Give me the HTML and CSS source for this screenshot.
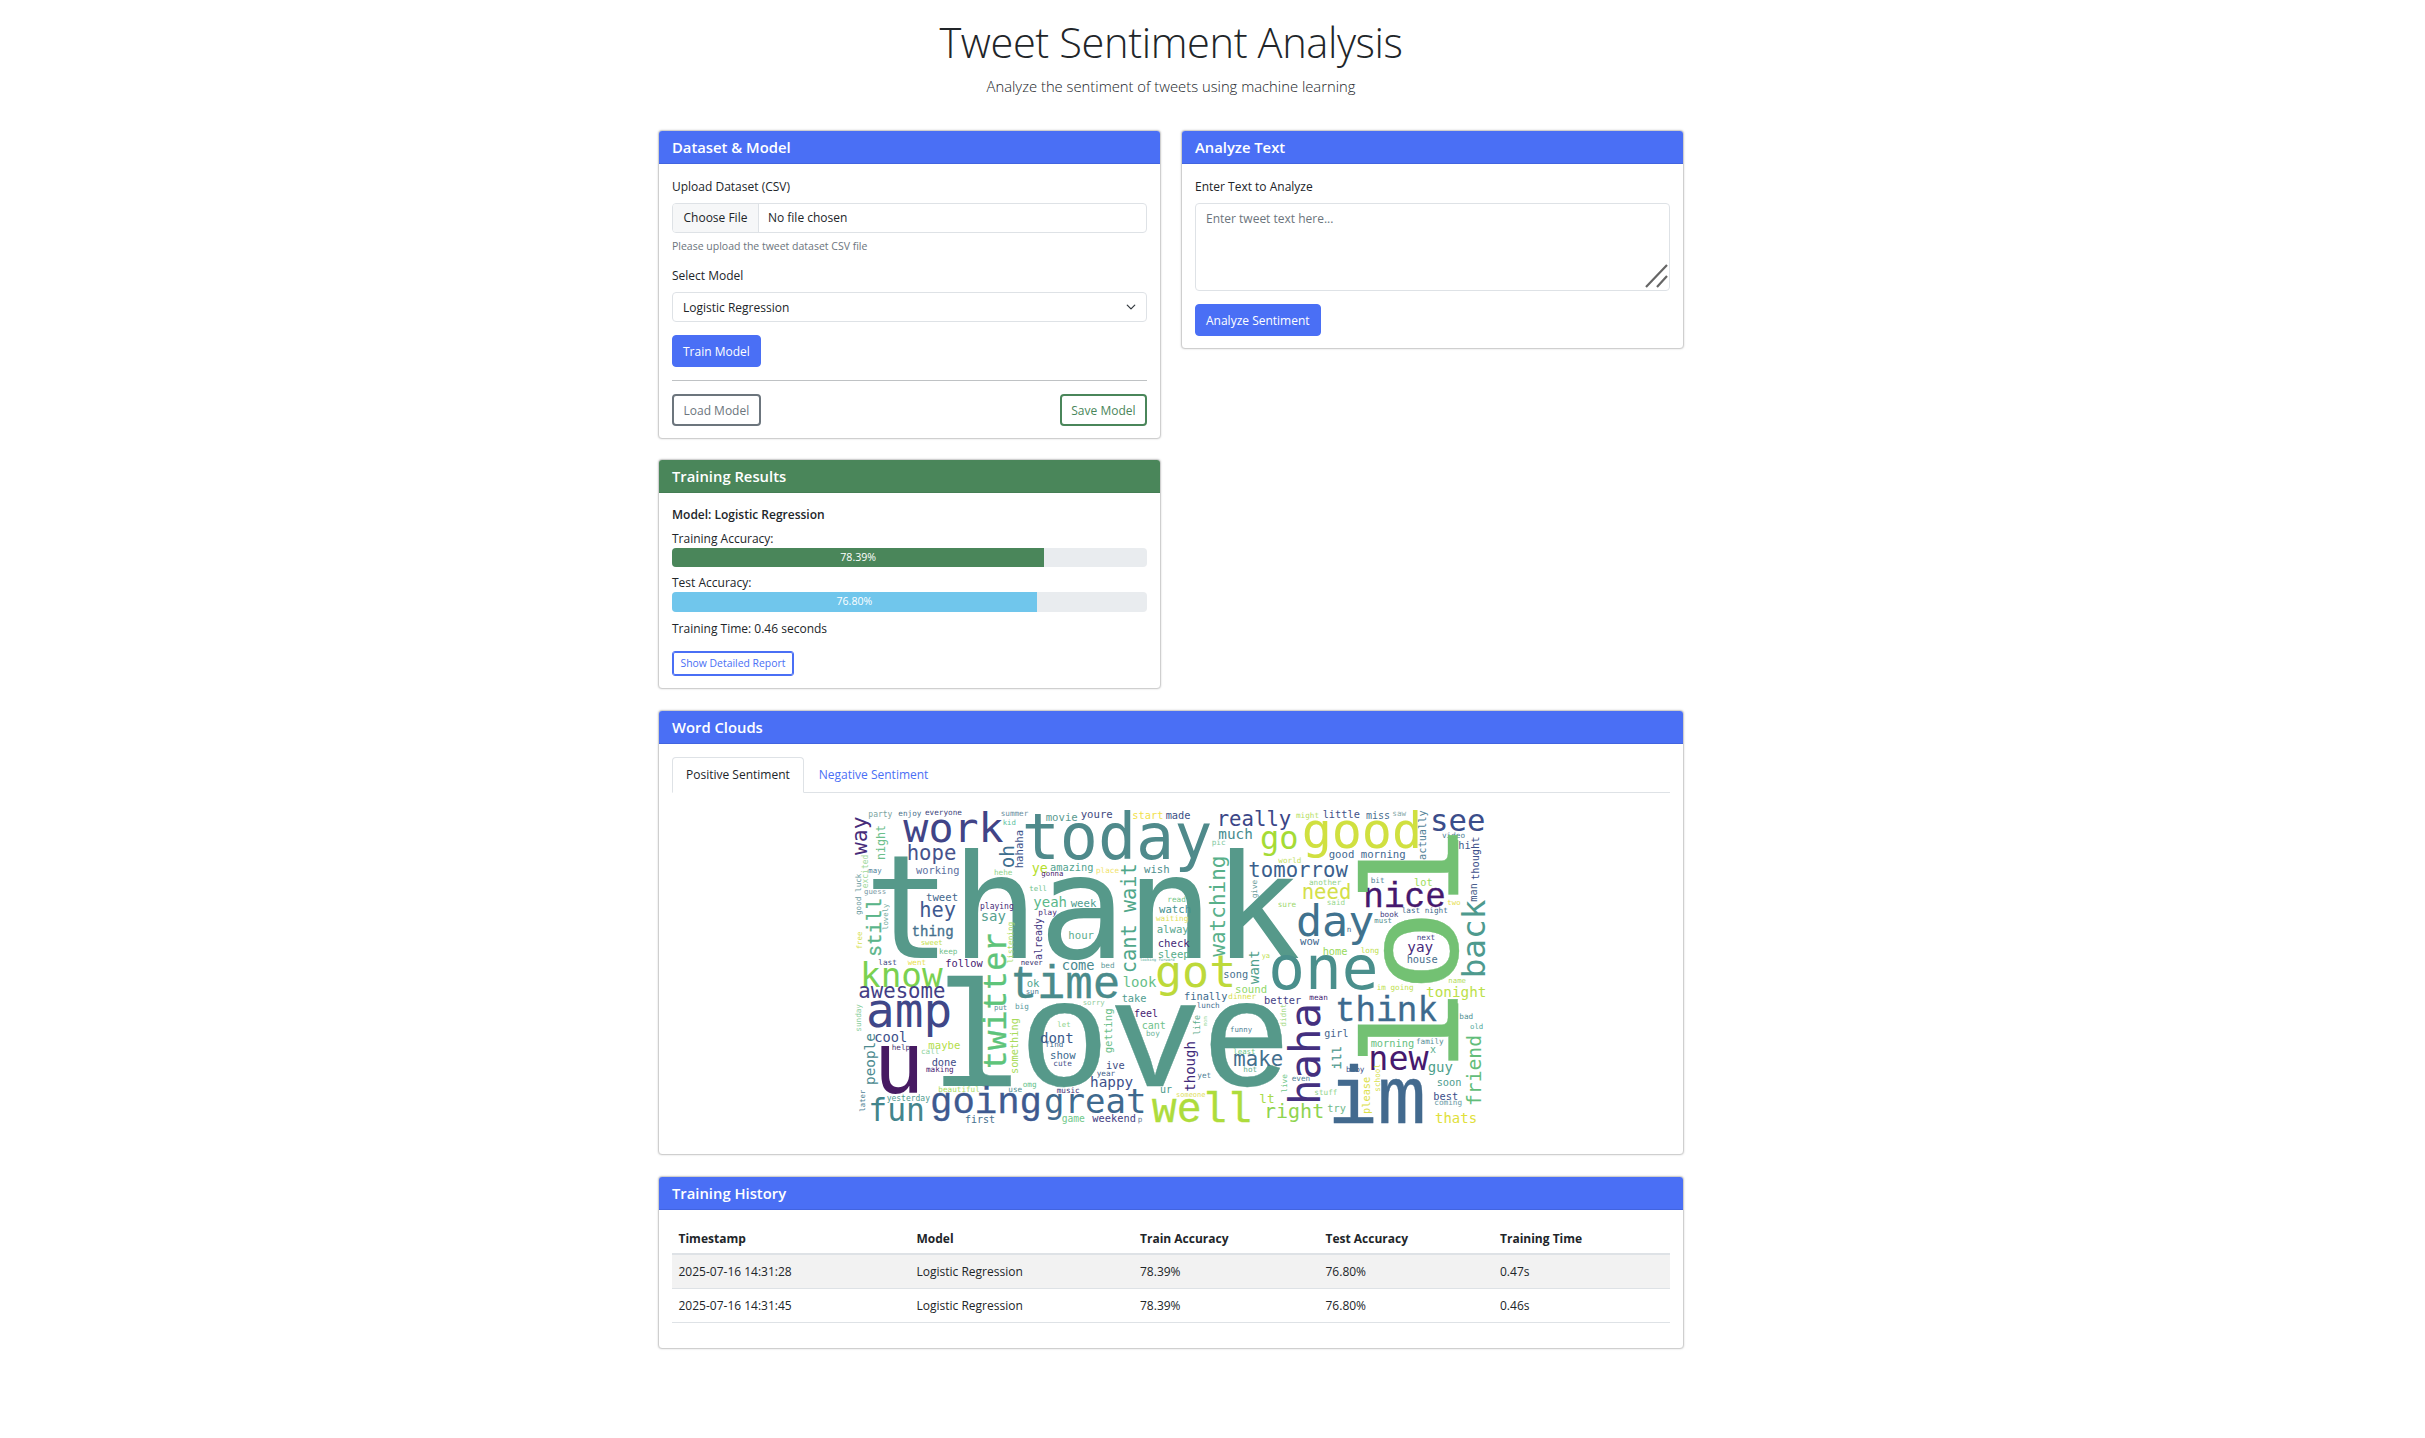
FILE: index.html
```html
<!DOCTYPE html>
<html lang="en">
<head>
<meta charset="utf-8">
<title>Tweet Sentiment Analysis</title>
<link rel="stylesheet" href="styles.css">
</head>
<body>
<div class="page">
  <header class="masthead">
    <h1>Tweet Sentiment Analysis</h1>
    <p>Analyze the sentiment of tweets using machine learning</p>
  </header>

  <div class="columns">
    <div class="column">
      <section class="card">
        <h2 class="card-head">Dataset &amp; Model</h2>
        <div class="card-body">
          <label class="label" for="file">Upload Dataset (CSV)</label>
          <input class="file" id="file" type="file">
          <div class="help">Please upload the tweet dataset CSV file</div>
          <label class="label" for="model">Select Model</label>
          <select class="select" id="model"><option>Logistic Regression</option></select>
          <button class="btn btn-primary btn-train" type="button">Train Model</button>
          <hr class="rule">
          <div class="split">
            <button class="btn btn-grey" type="button">Load Model</button>
            <button class="btn btn-green" type="button">Save Model</button>
          </div>
        </div>
      </section>

      <section class="card">
        <h2 class="card-head card-head-green">Training Results</h2>
        <div class="card-body">
          <div class="model-name">Model: Logistic Regression</div>
          <div class="metric">Training Accuracy:</div>
          <div class="bar"><div class="fill fill-green" style="width:78.39%">78.39%</div></div>
          <div class="metric metric-second">Test Accuracy:</div>
          <div class="bar bar-tall"><div class="fill fill-blue" style="width:76.8%">76.80%</div></div>
          <div class="time">Training Time: 0.46 seconds</div>
          <button class="btn-report" type="button">Show Detailed Report</button>
        </div>
      </section>
    </div>

    <div class="column">
      <section class="card">
        <h2 class="card-head">Analyze Text</h2>
        <div class="card-body">
          <label class="label" for="tweet">Enter Text to Analyze</label>
          <div class="area-wrap">
            <textarea class="area" id="tweet" placeholder="Enter tweet text here..."></textarea>
            <svg class="grip" width="24" height="24" viewBox="0 0 24 24"><path d="M2 23 23 1M13 23 23 12" stroke="#666" stroke-width="2.2" fill="none"/></svg>
          </div>
          <button class="btn btn-primary" type="button">Analyze Sentiment</button>
        </div>
      </section>
    </div>
  </div>

  <section class="card">
    <h2 class="card-head">Word Clouds</h2>
    <div class="card-body">
      <div class="tabs">
        <span class="tab tab-active">Positive Sentiment</span>
        <span class="tab tab-link">Negative Sentiment</span>
      </div>
      <svg class="cloud" viewBox="0 30 1980 990" width="660" height="330" role="img">
        <g>
          <text x="72" y="503" font-size="435" fill="#56998a">thank</text>
          <text class="flat" x="264" y="888" font-size="455" fill="#56998a" stroke="#56998a" stroke-width="8">love</text>
          <rect x="310" y="858" width="190" height="30" fill="#56998a"/>
          <text x="100" y="908" font-size="256" fill="#471a62">u</text>
          <text x="78" y="712" font-size="143" fill="#3f4788">amp</text>
          <text x="545" y="208" font-size="190" fill="#4f8a8b">today</text>
          <text x="190" y="155" font-size="125" fill="#414487">work</text>
          <text x="200" y="210" font-size="62" fill="#46528c">hope</text>
          <text x="82" y="195" font-size="64" fill="#472c7a" transform="rotate(-90 82 195)">way</text>
          <text class="flat" x="122" y="500" font-size="58" fill="#5ab58a" stroke="#5ab58a" transform="rotate(-90 122 500)">still</text>
          <text x="135" y="210" font-size="35" fill="#6cc08b" transform="rotate(-90 135 210)">night</text>
          <text x="523" y="235" font-size="58" fill="#3e6e8e" transform="rotate(-90 523 235)">oh</text>
          <text x="550" y="235" font-size="32" fill="#3b528b" transform="rotate(-90 550 235)">hahaha</text>
          <text x="85" y="82" font-size="24" fill="#7ba3a0">party</text>
          <text x="175" y="78" font-size="23" fill="#4a6f8a">enjoy</text>
          <text x="255" y="76" font-size="23" fill="#3b3f7a">everyone</text>
          <text x="482" y="78" font-size="23" fill="#6b8fa0">summer</text>
          <text x="488" y="106" font-size="22" fill="#5cc2a0">kid</text>
          <text x="617" y="92" font-size="32" fill="#5a9a8f">movie</text>
          <text x="722" y="84" font-size="32" fill="#3f4a80">youre</text>
          <text x="877" y="86" font-size="31" fill="#f2e14c">start</text>
          <text x="977" y="88" font-size="31" fill="#3a4f85">made</text>
          <text x="575" y="248" font-size="40" fill="#b5de2b">ye</text>
          <text x="630" y="242" font-size="31" fill="#52a38f">amazing</text>
          <text x="228" y="252" font-size="31" fill="#5b6fa0">working</text>
          <text x="462" y="256" font-size="23" fill="#8fd38a">hehe</text>
          <text x="768" y="248" font-size="23" fill="#f0e36a">place</text>
          <text x="604" y="258" font-size="22" fill="#4a2570">gonna</text>
          <text x="912" y="250" font-size="32" fill="#4f8f8e">wish</text>
          <text x="888" y="550" font-size="61" fill="#51a78a" transform="rotate(-90 888 550)">cant wait</text>
          <text x="84" y="295" font-size="24" fill="#a0d99a" transform="rotate(-90 84 295)">excited</text>
          <text x="85" y="250" font-size="22" fill="#4f7f9a">may</text>
          <text x="62" y="375" font-size="23" fill="#6a9aa0" transform="rotate(-90 62 375)">good luck</text>
          <text x="72" y="312" font-size="22" fill="#7b9aa5">guess</text>
          <text x="568" y="302" font-size="22" fill="#6fc28a">tell</text>
          <text x="258" y="332" font-size="32" fill="#46688e">tweet</text>
          <text x="238" y="382" font-size="61" fill="#3f5a90">hey</text>
          <text x="420" y="357" font-size="24" fill="#462a77">playing</text>
          <text x="580" y="352" font-size="42" fill="#5bb88a">yeah</text>
          <text x="692" y="350" font-size="32" fill="#4e9c8e">week</text>
          <text x="982" y="336" font-size="23" fill="#74c68a">read</text>
          <text x="957" y="370" font-size="32" fill="#458f90">watch</text>
          <text x="422" y="392" font-size="42" fill="#55a08e">say</text>
          <text x="595" y="375" font-size="23" fill="#492a77">play</text>
          <text x="948" y="392" font-size="23" fill="#e0e05a">waiting</text>
          <text x="145" y="420" font-size="22" fill="#74aaa0" transform="rotate(-90 145 420)">lovely</text>
          <text class="flat" x="215" y="438" font-size="42" fill="#46718e" stroke="#46718e">thing</text>
          <text x="605" y="510" font-size="30" fill="#453882" transform="rotate(-90 605 510)">already</text>
          <text x="685" y="448" font-size="32" fill="#60ad8e">hour</text>
          <text x="950" y="430" font-size="32" fill="#5ca890">alway</text>
          <text x="953" y="472" font-size="32" fill="#452a78">check</text>
          <text x="65" y="478" font-size="22" fill="#d6e04f" transform="rotate(-90 65 478)">free</text>
          <text x="518" y="520" font-size="23" fill="#a9dc65" transform="rotate(-90 518 520)">listening</text>
          <text x="242" y="464" font-size="22" fill="#c3df4a">sweet</text>
          <text x="297" y="492" font-size="23" fill="#6fc08a">keep</text>
          <text x="953" y="505" font-size="32" fill="#57ad8a">sleep</text>
          <text x="115" y="524" font-size="23" fill="#404a7f">last</text>
          <text x="203" y="524" font-size="23" fill="#e8e04a">went</text>
          <text x="316" y="530" font-size="31" fill="#462070">follow</text>
          <text x="542" y="524" font-size="22" fill="#3a2f70">never</text>
          <text x="665" y="540" font-size="41" fill="#4a8a90">come</text>
          <text x="782" y="534" font-size="23" fill="#5f9a9a">bed</text>
          <text x="900" y="512" font-size="11.5" fill="#55aa99">looking forward</text>
          <text x="60" y="590" font-size="103" fill="#7ad151">know</text>
          <text class="flat" x="510" y="625" font-size="138" fill="#4a8b8b" stroke="#4a8b8b" stroke-width="2">time</text>
          <text x="55" y="625" font-size="62" fill="#433e85">awesome</text>
          <text x="560" y="590" font-size="32" fill="#4fa590">ok</text>
          <text x="557" y="612" font-size="22" fill="#4a7d94">sun</text>
          <text x="848" y="592" font-size="42" fill="#68bf8a">look</text>
          <text x="845" y="635" font-size="31" fill="#4f9d90">take</text>
          <text x="728" y="644" font-size="22" fill="#8fcc9a">sorry</text>
          <text x="462" y="660" font-size="22" fill="#5a8c9a">put</text>
          <text x="525" y="658" font-size="23" fill="#5a9aa0">big</text>
          <text x="62" y="725" font-size="23" fill="#8ccfa0" transform="rotate(-90 62 725)">sunday</text>
          <text x="882" y="682" font-size="30" fill="#472374">feel</text>
          <text x="905" y="718" font-size="30" fill="#70c28a">cant</text>
          <text x="652" y="710" font-size="22" fill="#8ed38a">let</text>
          <text x="918" y="738" font-size="23" fill="#6fb59a">boy</text>
          <text x="815" y="790" font-size="32" fill="#6cc08b" transform="rotate(-90 815 790)">getting</text>
          <text class="flat" x="497" y="840" font-size="99" fill="#5ec47a" stroke="#5ec47a" stroke-width="2" transform="rotate(-90 497 840)">twitter</text>
          <text x="103" y="755" font-size="41" fill="#3c4f8a">cool</text>
          <text x="105" y="885" font-size="43" fill="#4c8a90" transform="rotate(-90 105 885)">people</text>
          <text x="535" y="852" font-size="31" fill="#a8db5a" transform="rotate(-90 535 852)">something</text>
          <text x="600" y="758" font-size="42" fill="#3b5a8c">dont</text>
          <text x="615" y="772" font-size="23" fill="#3e6a8e">find</text>
          <text x="265" y="778" font-size="32" fill="#b5de4a">maybe</text>
          <text x="155" y="780" font-size="23" fill="#46306f">help</text>
          <text x="243" y="793" font-size="23" fill="#8fd3a0">call</text>
          <text x="630" y="808" font-size="32" fill="#3d6a8e">show</text>
          <text x="275" y="828" font-size="31" fill="#3d4a85">done</text>
          <text x="258" y="845" font-size="23" fill="#4a2070">making</text>
          <text x="640" y="828" font-size="23" fill="#3f4f88">cute</text>
          <text x="798" y="836" font-size="31" fill="#3f4f85">ive</text>
          <text x="770" y="858" font-size="23" fill="#3f5f8c">year</text>
          <text x="750" y="892" font-size="43" fill="#3d4f8a">happy</text>
          <text x="295" y="905" font-size="23" fill="#a9db5e">beautiful</text>
          <text x="548" y="892" font-size="23" fill="#66c28a">omg</text>
          <text x="505" y="907" font-size="23" fill="#4f8f92">use</text>
          <text x="650" y="910" font-size="23" fill="#3f2f75">music</text>
          <text x="960" y="908" font-size="30" fill="#4a9a8c">ur</text>
          <text x="76" y="965" font-size="22" fill="#4f7f95" transform="rotate(-90 76 965)">later</text>
          <text x="140" y="932" font-size="24" fill="#4f9a90">yesterday</text>
          <text x="85" y="992" font-size="94" fill="#43858c">fun</text>
          <text class="flat" x="270" y="970" font-size="112" fill="#3e5a90" stroke="#3e5a90" stroke-width="2">going</text>
          <text x="612" y="970" font-size="102" fill="#3f6a8e">great</text>
          <text x="375" y="1000" font-size="30" fill="#45708e">first</text>
          <text x="665" y="995" font-size="29" fill="#70c88a">game</text>
          <text x="757" y="997" font-size="31" fill="#453f85">weekend</text>
          <text x="893" y="995" font-size="23" fill="#6a7fa0">p</text>
        </g>
        <g transform="translate(870 0)">
          <text class="flat" x="65" y="995" font-size="125" fill="#aedc3c" stroke="#aedc3c" stroke-width="2">well</text>
          <text x="75" y="590" font-size="135" fill="#bdd93a">got</text>
          <text x="162" y="630" font-size="31" fill="#3e6b8e">finally</text>
          <text x="200" y="655" font-size="23" fill="#3f6c8f">lunch</text>
          <text x="210" y="735" font-size="25" fill="#5fae8e" transform="rotate(-90 210 735)">life</text>
          <text x="230" y="708" font-size="16" fill="#9ad8a0" transform="rotate(-90 230 708)">mom</text>
          <text x="195" y="905" font-size="42" fill="#3f2a7a" transform="rotate(-90 195 905)">though</text>
          <text x="202" y="865" font-size="23" fill="#4f7f95">yet</text>
          <text x="138" y="920" font-size="21" fill="#e0e060">someone</text>
          <text x="515" y="175" font-size="150" fill="#d0e040">good</text>
          <text x="390" y="178" font-size="96" fill="#a5db36">go</text>
          <text x="260" y="108" font-size="62" fill="#3b4687">really</text>
          <text x="265" y="148" font-size="43" fill="#468b8e">much</text>
          <text x="578" y="85" font-size="31" fill="#3f5088">little</text>
          <text x="708" y="87" font-size="30" fill="#4a6f90">miss</text>
          <text x="787" y="78" font-size="23" fill="#88aaaa">saw</text>
          <text x="498" y="85" font-size="23" fill="#b5de5f">might</text>
          <text x="900" y="122" font-size="92" fill="#3b4d8a">see</text>
          <text x="887" y="210" font-size="31" fill="#507f96" transform="rotate(-90 887 210)">actually</text>
          <text x="936" y="143" font-size="23" fill="#4f7f95">video</text>
          <text x="985" y="178" font-size="31" fill="#3f5a8c">hi</text>
          <text x="1048" y="270" font-size="31" fill="#3c4f8a" transform="rotate(-90 1048 270)">thought</text>
          <text x="1042" y="335" font-size="31" fill="#4a5f8c" transform="rotate(-90 1042 335)">man</text>
          <text x="245" y="165" font-size="23" fill="#7fc8a0">pic</text>
          <text x="596" y="205" font-size="32" fill="#3f6790">good morning</text>
          <text x="445" y="220" font-size="23" fill="#c4df5f">world</text>
          <text x="355" y="262" font-size="62" fill="#3b5f8d">tomorrow</text>
          <text x="285" y="500" font-size="63" fill="#58b08a" transform="rotate(-90 285 500)">watching</text>
          <text x="515" y="327" font-size="62" fill="#d4e04a">need</text>
          <text x="537" y="284" font-size="23" fill="#8fd38a">another</text>
          <text x="722" y="280" font-size="23" fill="#4f7f95">bit</text>
          <text x="852" y="288" font-size="31" fill="#9ddc5a">lot</text>
          <text class="flat" x="700" y="352" font-size="103" fill="#46186e" stroke="#46186e" stroke-width="2">nice</text>
          <text x="380" y="325" font-size="23" fill="#6a9a9a" transform="rotate(-90 380 325)">give</text>
          <text x="443" y="352" font-size="23" fill="#9dd86a">sure</text>
          <text x="590" y="346" font-size="23" fill="#9ad890">said</text>
          <text x="952" y="345" font-size="22" fill="#e6e04a">two</text>
          <text x="815" y="370" font-size="23" fill="#3f6a8c">last night</text>
          <text x="750" y="382" font-size="23" fill="#3f3a80">book</text>
          <text x="733" y="400" font-size="22" fill="#55908f">must</text>
          <text x="498" y="438" font-size="130" fill="#40728e">day</text>
          <text x="1065" y="565" font-size="98" fill="#4e9a8e" transform="rotate(-90 1065 565)">back</text>
          <text x="650" y="426" font-size="23" fill="#44698c">n</text>
          <text x="510" y="466" font-size="32" fill="#3f6890">wow</text>
          <text x="860" y="450" font-size="23" fill="#433e85">next</text>
          <text x="832" y="485" font-size="43" fill="#472a7a">yay</text>
          <text x="830" y="520" font-size="31" fill="#48708e">house</text>
          <text x="578" y="495" font-size="31" fill="#98d95a">home</text>
          <text x="692" y="490" font-size="23" fill="#bde04f">long</text>
          <text x="395" y="505" font-size="21" fill="#bde050">ya</text>
          <text x="388" y="582" font-size="42" fill="#4fa08c" transform="rotate(-90 388 582)">want</text>
          <text x="415" y="598" font-size="183" fill="#4a8f8c">one</text>
          <text class="flat" x="985" y="851" font-size="410" fill="#73c173" stroke="#73c173" stroke-width="8" transform="rotate(-90 985 851)">lol</text>
          <rect x="955" y="640" width="30" height="172" fill="#73c173"/>
          <rect x="955" y="150" width="30" height="164" fill="#73c173"/>
          <text x="280" y="565" font-size="31" fill="#47708e">song</text>
          <text x="315" y="610" font-size="32" fill="#90d76a">sound</text>
          <text x="295" y="628" font-size="23" fill="#d8e04a">dinner</text>
          <text x="740" y="600" font-size="23" fill="#c0df50">im going</text>
          <text x="955" y="578" font-size="22" fill="#b5de5f">name</text>
          <text x="888" y="620" font-size="43" fill="#bbdf4a">tonight</text>
          <text x="402" y="642" font-size="31" fill="#433e85">better</text>
          <text x="538" y="630" font-size="23" fill="#43206f">mean</text>
          <text class="flat" x="615" y="692" font-size="103" fill="#3d6a8e" stroke="#3d6a8e" stroke-width="2">think</text>
          <text x="570" y="945" font-size="127" fill="#44307f" transform="rotate(-90 570 945)">haha</text>
          <text x="988" y="688" font-size="23" fill="#4f8f92">bad</text>
          <text x="468" y="710" font-size="23" fill="#a9db8a" transform="rotate(-90 468 710)">didnt</text>
          <text x="1020" y="716" font-size="22" fill="#4fa89a">old</text>
          <text x="300" y="726" font-size="22" fill="#4f7f95">funny</text>
          <text x="583" y="742" font-size="30" fill="#46648e">girl</text>
          <text x="722" y="772" font-size="31" fill="#66c080">morning</text>
          <text x="858" y="762" font-size="23" fill="#5a8c96">family</text>
          <text x="310" y="828" font-size="62" fill="#436f8e">make</text>
          <text class="flat" x="632" y="838" font-size="38" fill="#4e9a90" stroke="#4e9a90" transform="rotate(-90 632 838)">ill</text>
          <text x="900" y="790" font-size="30" fill="#5ab08e">x</text>
          <text x="310" y="792" font-size="22" fill="#70c98a">least</text>
          <text x="715" y="840" font-size="100" fill="#46196e">new</text>
          <text x="1052" y="948" font-size="59" fill="#62bd7a" transform="rotate(-90 1052 948)">friend</text>
          <text x="893" y="845" font-size="42" fill="#4ea08c">guy</text>
          <text x="340" y="845" font-size="23" fill="#5fb08e">hot</text>
          <text x="648" y="845" font-size="23" fill="#3e4f88">baby</text>
          <text x="750" y="905" font-size="23" fill="#d8e04a" transform="rotate(-90 750 905)">school</text>
          <text x="472" y="908" font-size="23" fill="#6fc78a" transform="rotate(-90 472 908)">live</text>
          <text x="485" y="874" font-size="23" fill="#4f7f95">even</text>
          <text x="920" y="888" font-size="31" fill="#4e9c8e">soon</text>
          <text x="720" y="972" font-size="31" fill="#dce04a" transform="rotate(-90 720 972)">please</text>
          <text x="553" y="916" font-size="23" fill="#8fd38a">stuff</text>
          <text x="910" y="930" font-size="31" fill="#3b4f8a">best</text>
          <text x="913" y="945" font-size="23" fill="#6a9aa5">coming</text>
          <text x="388" y="940" font-size="38" fill="#a9db4a">lt</text>
          <text x="402" y="985" font-size="60" fill="#8fd44f">right</text>
          <text x="592" y="965" font-size="31" fill="#6fb98a">try</text>
          <text class="flat" x="595" y="1000" font-size="245" fill="#436a8e" stroke="#436a8e" stroke-width="5">im</text>
          <text x="915" y="1000" font-size="42" fill="#e0e03a">thats</text>
        </g>
      </svg>
    </div>
  </section>

  <section class="card">
    <h2 class="card-head">Training History</h2>
    <div class="card-body">
      <table class="history">
        <thead>
          <tr><th>Timestamp</th><th>Model</th><th>Train Accuracy</th><th>Test Accuracy</th><th>Training Time</th></tr>
        </thead>
        <tbody>
          <tr><td>2025-07-16 14:31:28</td><td>Logistic Regression</td><td>78.39%</td><td>76.80%</td><td>0.47s</td></tr>
          <tr><td>2025-07-16 14:31:45</td><td>Logistic Regression</td><td>78.39%</td><td>76.80%</td><td>0.46s</td></tr>
        </tbody>
      </table>
    </div>
  </section>
</div>
</body>
</html>
```

FILE: styles.css
```css
* { box-sizing: border-box; }

body {
  margin: 0;
  background: #fff;
  color: #212529;
  font-family: "Open Sans", "Noto Sans", sans-serif;
  font-size: 12px;
  line-height: 19px;
}

.page {
  width: 1026px;
  margin-left: 658px;
  padding-bottom: 90px;
}

.masthead {
  text-align: center;
  padding-top: 15px;
  height: 130px;
}

.masthead h1 {
  margin: 0;
  font-size: 41.6px;
  font-weight: 300;
  line-height: 54px;
  letter-spacing: -0.4px;
}

.masthead p {
  margin: 7px 0 0;
  font-size: 14.8px;
  font-weight: 300;
  line-height: 20px;
}

.columns {
  display: grid;
  grid-template-columns: 503px 503px;
  gap: 20px;
  align-items: start;
  margin-bottom: 21px;
}

.column {
  display: flex;
  flex-direction: column;
  gap: 20px;
}

.card {
  background: #fff;
  border: 1px solid #cfcfcf;
  border-radius: 4px;
  box-shadow: 0 0 2px rgba(0, 0, 0, .18);
  overflow: hidden;
  margin-bottom: 21px;
}

.column .card { margin-bottom: 0; }

.card-head {
  margin: 0;
  height: 33px;
  padding: 0 13px;
  background: #4a6ff5;
  border-bottom: 1px solid #4264e0;
  color: #fff;
  font-size: 14.8px;
  font-weight: 600;
  line-height: 32px;
}

.card-head-green {
  background: #4a865a;
  border-bottom-color: #447d54;
}

.card-body { padding: 13px 13px 12px; }

.label { display: block; margin-bottom: 7px; }

.file {
  display: block;
  width: 100%;
  height: 30px;
  border: 1px solid #dee2e6;
  border-radius: 4px;
  font: inherit;
  color: #212529;
  line-height: 28px;
}

.file::file-selector-button {
  height: 28px;
  margin: 0 9px 0 0;
  padding: 0 10.5px;
  border: 0;
  border-right: 1px solid #dee2e6;
  background: #f6f7f8;
  color: #212529;
  font: inherit;
}

.help {
  margin-top: 3px;
  margin-bottom: 10px;
  font-size: 10.5px;
  line-height: 20px;
  color: #6c757d;
}

.select {
  display: block;
  width: 100%;
  height: 30px;
  padding: 0 10px;
  border: 1px solid #dee2e6;
  border-radius: 4px;
  background: #fff url("data:image/svg+xml,%3Csvg xmlns='http://www.w3.org/2000/svg' viewBox='0 0 16 16'%3E%3Cpath fill='none' stroke='%23343a40' stroke-linecap='round' stroke-linejoin='round' stroke-width='2' d='m2 5 6 6 6-6'/%3E%3C/svg%3E") no-repeat right 10px center / 10px 10px;
  font: inherit;
  color: #212529;
  appearance: none;
}

.btn {
  display: inline-block;
  height: 32px;
  padding: 0 10px;
  border: 1px solid transparent;
  border-radius: 4px;
  background: #fff;
  font: inherit;
}

.btn-primary {
  background: #4a6ff5;
  color: #fff;
  border-color: #4a6ff5;
}

.btn-train { display: block; margin-top: 13px; }

.btn-grey {
  padding: 0 9.5px;
  border: 2px solid #6c757d;
  color: #6c757d;
}

.btn-green {
  padding: 0 9.5px;
  border: 2px solid #4a865a;
  color: #4a865a;
}

.rule {
  margin: 13px 0;
  border: 0;
  border-top: 1px solid #bfc2c4;
}

.split {
  display: flex;
  justify-content: space-between;
}

.model-name { font-weight: 600; margin-top: -1px; }

.metric { margin-top: 6px; line-height: 18px; }
.metric-second { margin-top: 7px; }

.bar {
  height: 19px;
  background: #e9ecef;
  border-radius: 4px;
  overflow: hidden;
}

.bar-tall { height: 20px; }

.fill {
  height: 100%;
  text-align: center;
  color: #fff;
  font-size: 10.6px;
  line-height: 19px;
}

.fill-green { background: #4a865a; }
.fill-blue { background: #70c6ec; }

.time { margin-top: 7px; }

.btn-report {
  display: block;
  height: 25px;
  margin-top: 13px;
  padding: 0 7.5px;
  border: 1px solid #4a6ff5;
  outline: 1px solid #4a6ff5;
  outline-offset: -2px;
  border-radius: 3px;
  background: #fff;
  color: #4a6ff5;
  font: inherit;
  font-size: 10.4px;
}

.area-wrap { position: relative; }

.area {
  display: block;
  width: 100%;
  height: 88px;
  padding: 5px 10px;
  border: 1px solid #dee2e6;
  border-radius: 4px;
  font: inherit;
  color: #212529;
  resize: none;
}

.area::placeholder { color: #6c757d; }

.grip {
  position: absolute;
  right: 2px;
  bottom: 3px;
}

.area-wrap + .btn { margin-top: 13px; }

.tabs {
  display: flex;
  height: 36px;
  border-bottom: 1px solid #dee2e6;
}

.tab {
  height: 36px;
  padding: 0 13px;
  line-height: 34px;
}

.tab-link { padding: 0 15px; color: #4a6ff5; line-height: 35px; }

.tab-active {
  color: #212529;
  background: #fff;
  border: 1px solid #dee2e6;
  border-bottom-color: #fff;
  border-radius: 4px 4px 0 0;
}

.cloud {
  display: block;
  margin: 7px 0 12px 168px;
  font-family: "DejaVu Sans Mono", monospace;
}

.flat {
  font-family: "Liberation Mono", monospace;
  stroke-width: 1;
}

.history {
  width: 100%;
  border-collapse: collapse;
  table-layout: fixed;
  margin-bottom: 13px;
}

.history th,
.history td {
  padding: 0 6.5px;
  height: 34px;
  text-align: left;
  border-bottom: 1px solid #dee2e6;
}

.history th { font-weight: 700; height: 31px; border-bottom-width: 2px; }

.history th:nth-child(1) { width: 238px; }
.history th:nth-child(2) { width: 223.5px; }
.history th:nth-child(3) { width: 185.5px; }
.history th:nth-child(4) { width: 174.5px; }

.history tbody tr:nth-child(odd) { background: #f2f2f2; }
```
